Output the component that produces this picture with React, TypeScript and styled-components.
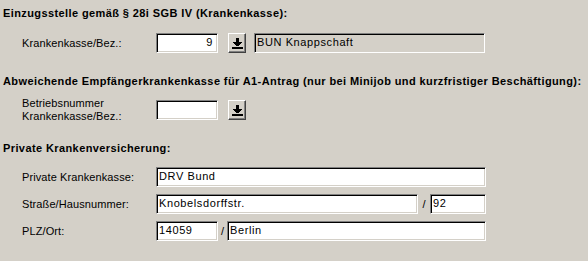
import styled, { createGlobalStyle } from "styled-components";

const GlobalStyle = createGlobalStyle`
  html, body {
    margin: 0;
    padding: 0;
    background: #d4d0c8;
  }
`;

const Page = styled.div`
  width: 588px;
  height: 261px;
  box-sizing: border-box;
  padding-top: 6px;
  background: #d4d0c8;
  font-family: "Liberation Sans", Arial, sans-serif;
  font-size: 11px;
  color: #000;
  display: flex;
  flex-direction: column;
`;

const Heading = styled.div<{ $gap: number }>`
  margin-top: ${(p) => p.$gap}px;
  padding-left: 3px;
  font-weight: bold;
  letter-spacing: 0.4px;
  line-height: 14px;
  height: 14px;
  white-space: nowrap;
`;

const Row = styled.div<{ $gap: number }>`
  margin-top: ${(p) => p.$gap}px;
  display: grid;
  grid-template-columns: 134px auto;
  align-items: center;
  padding-left: 22px;
  height: 20px;
`;

const TallRow = styled(Row)`
  height: 26px;
`;

const Label = styled.div`
  line-height: 13px;
  letter-spacing: 0.1px;
  white-space: nowrap;
`;

const Fields = styled.div`
  display: flex;
  align-items: center;
  height: 20px;
`;

const Box = styled.div<{ $width: number; $right?: boolean; $readonly?: boolean }>`
  width: ${(p) => p.$width}px;
  height: 20px;
  box-sizing: border-box;
  border-top: 1px solid #808080;
  border-left: 1px solid #808080;
  border-right: 1px solid #ffffff;
  border-bottom: 1px solid #ffffff;
  box-shadow: inset 1px 1px 0 #000, inset -1px -1px 0 #d4d0c8;
  background: ${(p) => (p.$readonly ? "#d4d0c8" : "#ffffff")};
  padding: 0 4px 0 2px;
  font-size: 11px;
  letter-spacing: 0.6px;
  line-height: 17px;
  text-align: ${(p) => (p.$right ? "right" : "left")};
  white-space: nowrap;
  overflow: hidden;
`;

const Slash = styled.span<{ $width: number }>`
  width: ${(p) => p.$width}px;
  text-align: center;
`;

const Spacer = styled.span<{ $width: number }>`
  width: ${(p) => p.$width}px;
`;

const DropButton = styled.div`
  width: 18px;
  height: 20px;
  box-sizing: border-box;
  background: #d4d0c8;
  border-top: 1px solid #ffffff;
  border-left: 1px solid #ffffff;
  border-right: 1px solid #404040;
  border-bottom: 1px solid #404040;
  box-shadow: inset -1px -1px 0 #808080;
  display: flex;
  align-items: center;
  justify-content: center;
`;

const ArrowIcon = () => (
  <svg width="11" height="11" viewBox="0 0 11 11" shapeRendering="crispEdges">
    <rect x="4" y="0" width="3" height="4" fill="#000" />
    <rect x="1" y="4" width="9" height="1" fill="#000" />
    <rect x="2" y="5" width="7" height="1" fill="#000" />
    <rect x="3" y="6" width="5" height="1" fill="#000" />
    <rect x="4" y="7" width="3" height="1" fill="#000" />
    <rect x="0" y="9" width="11" height="2" fill="#000" />
  </svg>
);

export default function App() {
  return (
    <>
      <GlobalStyle />
      <Page>
        <Heading $gap={0}>Einzugsstelle gemäß § 28i SGB IV (Krankenkasse):</Heading>
        <Row $gap={13}>
          <Label>Krankenkasse/Bez.:</Label>
          <Fields>
            <Box $width={62} $right>9</Box>
            <Spacer $width={10} />
            <DropButton>
              <ArrowIcon />
            </DropButton>
            <Spacer $width={8} />
            <Box $width={231} $readonly>BUN Knappschaft</Box>
          </Fields>
        </Row>
        <Heading $gap={21}>
          Abweichende Empfängerkrankenkasse für A1-Antrag (nur bei Minijob und kurzfristiger Beschäftigung):
        </Heading>
        <TallRow $gap={9}>
          <Label>
            Betriebsnummer
            <br />
            Krankenkasse/Bez.:
          </Label>
          <Fields>
            <Box $width={62} $right />
            <Spacer $width={10} />
            <DropButton>
              <ArrowIcon />
            </DropButton>
          </Fields>
        </TallRow>
        <Heading $gap={18}>Private Krankenversicherung:</Heading>
        <Row $gap={12}>
          <Label>Private Krankenkasse:</Label>
          <Fields>
            <Box $width={330}>DRV Bund</Box>
          </Fields>
        </Row>
        <Row $gap={7}>
          <Label>Straße/Hausnummer:</Label>
          <Fields>
            <Box $width={262}>Knobelsdorffstr.</Box>
            <Slash $width={12}>/</Slash>
            <Box $width={56}>92</Box>
          </Fields>
        </Row>
        <Row $gap={7}>
          <Label>PLZ/Ort:</Label>
          <Fields>
            <Box $width={62}>14059</Box>
            <Slash $width={9}>/</Slash>
            <Box $width={259}>Berlin</Box>
          </Fields>
        </Row>
      </Page>
    </>
  );
}
